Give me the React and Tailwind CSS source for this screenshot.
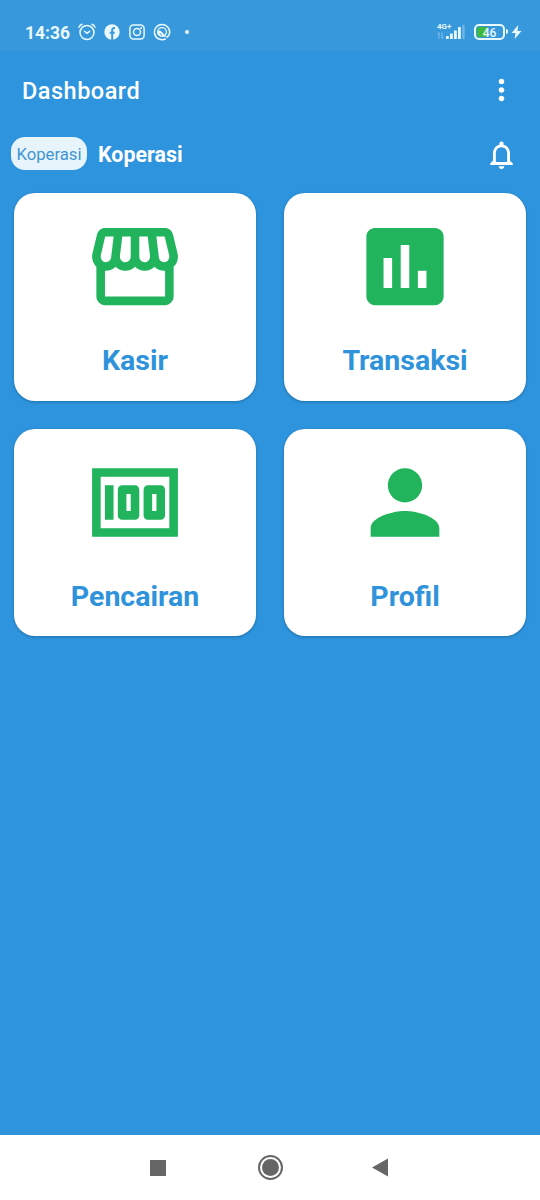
import {
  MdAssessment,
  MdMoney,
  MdMoreVert,
  MdNotificationsNone,
  MdOutlineStorefront,
  MdPerson,
} from "react-icons/md";

const menus = [
  { label: "Kasir", Icon: MdOutlineStorefront },
  { label: "Transaksi", Icon: MdAssessment },
  { label: "Pencairan", Icon: MdMoney },
  { label: "Profil", Icon: MdPerson },
];

const StatusBar = () => {
  return (
    <div className="flex h-[51px] items-start bg-[#3798db] pt-[23px] pr-[18px] pl-[25px] text-[#e9f8ff]">
      <span className="w-[53px] text-[17.5px] leading-5 font-bold">
        14:36
      </span>
      {/* alarm */}
      <svg
        className="h-[18px] w-[18px] shrink-0"
        viewBox="0 0 18 18"
        fill="none"
        stroke="currentColor"
        strokeWidth="1.5"
        strokeLinecap="round"
      >
        <circle cx="9" cy="9.6" r="7" />
        <path d="M1 4.2Q1.8 2.2 4 1.3M17 4.2Q16.2 2.2 14 1.3M6.4 8.2l2.6 2.2 2.6-2" />
      </svg>
      {/* facebook */}
      <svg
        className="mt-px ml-2 h-4 w-4 shrink-0"
        viewBox="0 0 16 16"
        fill="none"
      >
        <circle cx="8" cy="8" r="7.7" fill="currentColor" />
        <path
          d="M8.2 16V6.4c0-1.8.8-2.5 2.8-2.3M5.7 8.8h5"
          stroke="#3798db"
          strokeWidth="2"
        />
      </svg>
      {/* instagram */}
      <svg
        className="mt-px ml-[9px] h-4 w-4 shrink-0"
        viewBox="0 0 16 16"
        fill="none"
        stroke="currentColor"
        strokeWidth="1.5"
      >
        <rect x="0.9" y="0.9" width="14.2" height="14.2" rx="3.5" />
        <circle cx="8" cy="8" r="3.5" />
        <circle cx="12.1" cy="3.9" r="1" fill="currentColor" stroke="none" />
      </svg>
      <svg
        className="ml-2 h-[18px] w-[18px] shrink-0"
        viewBox="0 0 18 18"
        fill="none"
        stroke="currentColor"
      >
        <path
          d="M12.8 15.7A7.6 7.6 0 1 1 16.3 11.3c-.5 1.4-1.6 2.5-2.8 3.4"
          strokeWidth="1.6"
        />
        <circle cx="9" cy="9" r="4.4" strokeWidth="1.4" />
        <path
          d="M4.6 8c1.8-1 3.2-.4 4.4 1l4.6 4.8H9.4C6.6 13.4 4.8 11.4 4.6 8z"
          fill="currentColor"
          stroke="none"
        />
        <path d="M7 10.6l2.2 2" stroke="#3798db" strokeWidth="1" />
      </svg>
      <span className="mt-[7px] ml-[14px] h-1 w-1 shrink-0 rounded-full bg-current" />

      <div className="ml-auto flex">
        <div className="flex w-[37px]">
          <div className="flex w-[8px] flex-col">
            <span className="-mt-px text-[8px] leading-[9px] font-bold whitespace-nowrap">
              4G+
            </span>
            <svg
              className="mt-px h-[7px] w-[7px]"
              viewBox="0 0 7 7"
              fill="none"
              stroke="currentColor"
              opacity="0.5"
            >
              <path d="M2 0.5v6M0.8 2 2 0.5M5 0.5v6M6.2 5 5 6.5" strokeWidth="0.9" />
            </svg>
          </div>
          <svg
            className="mt-px h-[15px] w-[21px]"
            viewBox="0 0 21 15"
            fill="currentColor"
          >
            <rect x="1" y="12" width="2.8" height="3" rx="0.6" />
            <rect x="5" y="9.5" width="2.8" height="5.5" rx="0.6" />
            <rect x="9" y="6.5" width="2.8" height="8.5" rx="0.6" />
            <rect x="13" y="3" width="2.8" height="12" rx="0.6" />
            <rect x="17.2" y="0.8" width="2.5" height="14.2" rx="0.6" opacity="0.3" />
          </svg>
        </div>
        <div className="mt-px flex h-4 w-[31px] items-center justify-center rounded-[5px] border-2 border-current bg-linear-to-r from-[#3fb83c] from-45% to-transparent to-45% bg-clip-content p-px text-[#e9f8ff]">
          <span className="pt-0.5 text-[12px] leading-none font-medium">
            46
          </span>
        </div>
        <span className="mt-[6px] ml-px h-[5px] w-[2px] rounded-r bg-current" />
        <svg
          className="mt-0.5 ml-[3px] h-[14px] w-[11px]"
          viewBox="0 0 11 14"
          fill="currentColor"
        >
          <path d="M7.3 0 .5 8h4L3.7 14l6.8-8h-4z" />
        </svg>
      </div>
    </div>
  );
};

const MenuCard = ({ label, Icon }) => {
  return (
    <button className="flex h-[207.5px] flex-col items-center rounded-[21px] bg-white pt-[22px] shadow-[0_1px_3px_rgba(0,0,0,0.25)]">
      <Icon className="h-[103px] w-[104px] text-[#21b45d]" />
      <span className="mt-[26px] text-[28.5px] leading-[34px] font-bold text-[#2f93db]">
        {label}
      </span>
    </button>
  );
};

const NavBar = () => {
  return (
    <div className="flex h-[65px] items-center justify-between bg-white pr-[152px] pl-[150px]">
      <span className="h-4 w-4 bg-[#666]" />
      <span className="ml-[2px] flex h-[25px] w-[25px] items-center justify-center rounded-full border-2 border-[#666]">
        <span className="h-[17px] w-[17px] rounded-full bg-[#666]" />
      </span>
      <svg className="h-[19px] w-4" viewBox="0 0 16 19" fill="#666">
        <path d="M0 9.5 16 0.5v18z" />
      </svg>
    </div>
  );
};

const App = () => {
  return (
    <div className="flex h-[1200px] w-[540px] flex-col bg-[#2d94dd] font-[Roboto,sans-serif]">
      <StatusBar />
      <header className="flex h-[78px] items-center justify-between pr-[21px] pl-[22px] text-white">
        <h1 className="mt-px text-[23.5px] leading-7 font-medium tracking-[0.5px]">
          Dashboard
        </h1>
        <MdMoreVert className="h-[34px] w-[35px]" />
      </header>
      <div className="flex h-[64px] items-start pt-2 pr-[21px] pl-[11px] text-white">
        <span className="flex h-[33px] w-[76px] items-center justify-center rounded-[14px] bg-[#e8f4fb] pt-0.5 text-[16.7px] text-[#3f95d2]">
          Koperasi
        </span>
        <span className="mt-1 ml-[11px] text-[21.4px] leading-7 font-bold">
          Koperasi
        </span>
        <MdNotificationsNone className="mt-px ml-auto h-[34px] w-[35px]" />
      </div>
      <main className="grid grid-cols-2 gap-7 px-[14px]">
        {menus.map((menu) => (
          <MenuCard key={menu.label} {...menu} />
        ))}
      </main>
      <div className="flex-1" />
      <NavBar />
    </div>
  );
};

export default App;
